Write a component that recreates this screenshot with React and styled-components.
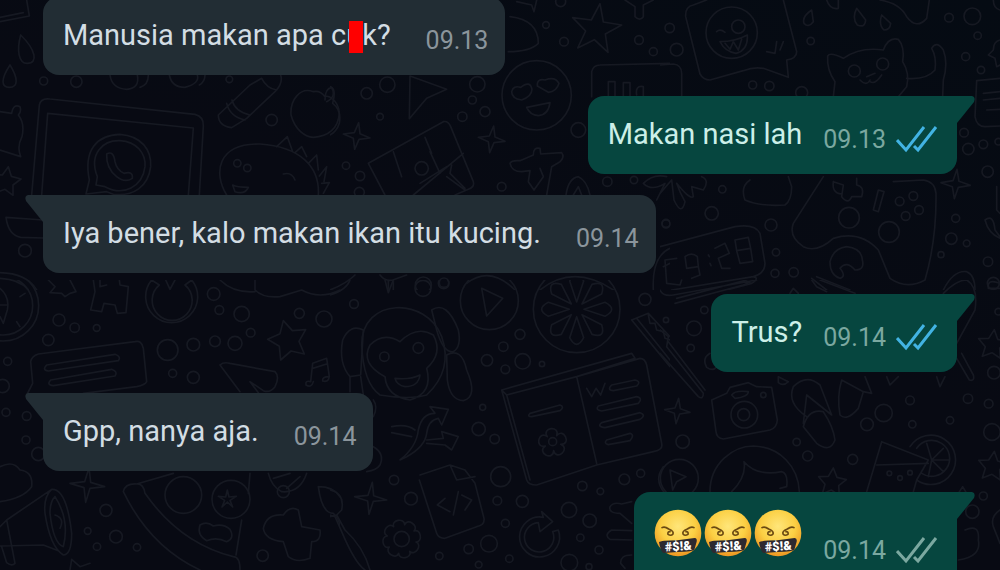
import React from 'react'
import styled, { createGlobalStyle } from 'styled-components'

const colors = {
  night: '#080a13',
  doodle: '#161922',
  incoming: '#222d34',
  incomingText: '#d3dde4',
  incomingMeta: '#8b959c',
  outgoing: '#06463f',
  outgoingText: '#ccefe8',
  outgoingMeta: '#7ba8a0',
  read: '#42b3e3',
  censor: '#ff0000',
}

const messages = [
  { id: 1, text: ['Manusia makan apa c', 'u', 'k?'], time: '09.13' },
  { id: 2, text: ['Makan nasi lah'], time: '09.13', mine: true, read: true, tail: true },
  { id: 3, text: ['Iya bener, kalo makan ikan itu kucing.'], time: '09.14', tail: true },
  { id: 4, text: ['Trus?'], time: '09.14', mine: true, read: true, tail: true },
  { id: 5, text: ['Gpp, nanya aja.'], time: '09.14', tail: true },
  { id: 6, emojis: 3, time: '09.14', mine: true, tail: true },
]

const polar = (cx, cy, len, a) => `${Math.round(cx + Math.cos(a) * len)} ${Math.round(cy + Math.sin(a) * len)}`

const star = (cx, cy, r, points = 5, inner = 0.5, turn = 0) => {
  const step = Math.PI / points
  let d = ''
  for (let i = 0; i < points * 2; i++) {
    const len = i % 2 ? r * inner : r
    d += `${i ? 'L' : 'M'}${polar(cx, cy, len, i * step - Math.PI / 2 + turn)}`
  }
  return d + 'Z'
}

// like star, but every tip is a round lobe
const flower = (cx, cy, valley, tip, petals, turn = 0) => {
  const step = (Math.PI * 2) / petals
  let d = `M${polar(cx, cy, valley, turn)}`
  for (let i = 0; i < petals; i++) {
    const a = turn + i * step
    d += `C${polar(cx, cy, tip, a + step * 0.08)} ${polar(cx, cy, tip, a + step * 0.92)} ${polar(cx, cy, valley, a + step)}`
  }
  return d + 'Z'
}

// every tile of the wallpaper is drawn on a 1020x870 board
const tiles = [
  {
    x: 0,
    y: 0,
    paths: [
      'M0 65L88 48L80 0M0 52L70 38',
      'M62 105C50 150 55 190 82 190C115 190 108 150 62 105Z',
      'M30 195C0 240 5 262 28 262C55 262 55 235 30 195Z',
      'M330 225Q335 265 380 268Q420 265 412 225M420 262Q445 255 445 225',
      'M508 225Q515 262 555 262Q600 250 592 225M598 255Q615 245 615 225',
      'M95 585L118 315Q122 293 150 297L585 343Q612 350 610 378L598 585',
      'M125 585L143 340L580 384L565 585',
      'M258 582L268 540C250 450 290 405 360 403C425 408 455 450 452 500C445 560 400 590 340 583L320 575L258 582',
      'M288 555L292 530C265 460 310 420 360 422C410 425 438 460 435 500C428 560 370 590 315 560Z',
      'M320 462Q340 450 345 485Q350 510 372 520Q400 512 397 535Q375 550 350 530Q318 505 320 462Z',
      'M655 345L750 255L785 235M655 345Q655 378 695 383L740 355L825 275Q850 250 842 225M680 310Q690 350 735 360M696 300Q705 335 750 345M785 235Q800 265 830 270',
      'M940 275C900 260 870 300 873 345C885 390 915 410 940 412C985 410 1015 385 1018 340C1015 300 985 285 975 290Q960 270 940 275M975 300Q975 265 995 263Q1010 290 980 305',
      'M680 585C640 520 650 430 780 432C900 440 960 500 955 585M830 440L862 410L877 452M885 458L905 440L920 470M925 490L950 465L955 510M958 528L980 500L972 545M965 550L988 548L970 580',
      'M698 555Q710 562 745 562Q735 585 705 575ZM850 522Q875 515 885 540',
      'M0 335L35 340Q40 310 60 320Q65 335 55 345Q75 370 66 410Q50 440 62 470L0 450',
      star(18, 545, 46, 5, 0.5, 0.15),
      'M130 660L18 652Q25 705 62 712L130 714',
      'M0 818Q80 820 110 870M0 835Q60 838 85 870',
    ],
    dots: [[131, 243, 12], [229, 245, 17], [815, 360, 17], [75, 752, 19], [712, 490, 11], [742, 504, 11], [688, 238, 10]],
  },
  {
    x: 330,
    y: 0,
    paths: [
      'M0 260Q20 265 8 310Q35 330 28 370Q20 395 0 405M540 50Q625 60 625 130Q600 155 535 155',
      'M560 5L605 15L612 35L620 0',
      star(798, 88, 78, 5, 0.4, 0.15),
      'M885 0L915 20L915 50Q930 65 940 50L940 15L970 0',
      'M240 228L350 268L290 295L238 356Z',
      'M545 275Q550 255 572 262Q600 240 606 268Q605 290 575 300Q545 295 545 275ZM622 258Q620 235 645 240Q675 228 687 250Q680 275 655 277ZM590 322L660 308Q655 345 625 347Q600 345 590 322Z',
      'M785 290L785 215Q790 195 810 195L1020 190M835 290V245H855V290M880 290V248H900V290M920 285Q915 255 940 260L940 290',
      star(80, 408, 40, 4, 0.3, 0.15),
      star(485, 418, 40, 4, 0.3, 0.15),
      'M165 585L115 490L340 365Q355 362 362 380L430 545Q435 560 415 568L375 585M285 412L305 460M190 455L215 530M300 455L330 520M250 585L400 460M350 530L405 570M270 550L350 500M365 495L360 520L405 565',
      'M540 490Q545 480 570 482L610 465Q610 440 630 445L632 462L695 458Q705 470 690 485L665 500L650 585M540 490Q545 515 575 515L600 512L595 545L612 570L640 530L630 505',
      'M708 585Q715 535 745 530Q770 540 780 585M730 585L745 560L755 585',
      'M940 550Q970 520 1010 530M940 550Q965 575 1005 550L980 600',
      'M0 870Q50 850 75 825M150 825Q165 845 188 840L230 825M175 842L175 870M190 842L190 870M410 850Q480 795 555 870M630 870Q730 790 850 870',
      'M970 870Q965 770 1020 745M1000 800L1020 790',
    ],
    dots: [[692, 5, 15], [648, 75, 10], [702, 125, 13], [927, 120, 13], [970, 155, 12], [172, 254, 23], [110, 280, 17], [442, 253, 23], [427, 300, 12], [465, 335, 15], [150, 350, 10], [397, 350, 14], [620, 286, 104], [275, 505, 20], [48, 497, 11], [90, 528, 14], [88, 577, 15], [515, 560, 13], [745, 390, 22], [832, 545, 14], [912, 540, 11], [280, 855, 24], [342, 848, 14], [1008, 670, 12]],
  },
  {
    x: 660,
    y: 0,
    paths: [
      'M370 0L410 155Q410 175 380 180L385 232L310 205Q280 200 250 212L150 240Q130 240 120 222L77 50Q75 20 100 15L140 0',
      'M180 125Q225 125 262 105Q265 150 228 160Q195 155 180 125ZM195 130L210 148L220 125L235 150L245 118M170 95Q180 85 195 97M320 155L345 160L350 125M360 150L370 125',
      'M455 30Q425 50 432 70Q445 85 460 65ZM590 25Q575 55 592 75Q615 85 617 60ZM665 45Q655 75 672 90Q690 90 692 70ZM500 0Q510 30 535 25L535 0',
      'M660 0Q720 10 740 50Q770 90 800 55L808 0',
      'M0 195L40 192Q65 195 65 220L65 290',
      'M520 290L525 245Q500 210 503 168Q510 155 550 175Q600 140 670 150Q685 110 715 118Q735 140 728 185Q750 220 740 260L715 290M620 230L645 220M630 245Q645 255 665 225M600 240Q620 260 630 240',
      'M740 235Q800 240 825 210Q830 170 815 145Q830 120 850 150Q865 190 850 240L848 290',
      'M1020 120Q1000 125 1000 150L985 165L1005 175L1010 200L1020 195M1000 0Q1000 25 1020 30',
      'M1020 235L950 242L945 350Q950 380 975 380L1020 378M970 280L1020 275M970 300L1020 295M980 330L1020 328',
      'M0 580L35 540L42 600Q65 650 75 605Q60 580 50 550Q90 600 100 590L95 560L130 570Q150 540 125 530',
      'M270 540Q240 560 255 600Q300 620 375 615Q395 600 395 560L385 530',
      'M490 530L400 670Q385 710 430 740Q470 760 520 715Q600 690 655 750L690 835Q740 870 795 840Q830 720 828 580Q825 545 790 540L700 545',
      'M520 545L550 555L545 590Q565 615 575 590L605 590Q615 560 590 555L590 535M520 545Q515 580 545 582M640 630L655 570L672 575L655 635Z',
      star(887, 552, 44, 4, 0.3, 0.1),
      'M0 740L225 680Q285 670 300 700L315 790Q315 820 280 830L35 870M280 830Q300 835 275 850L200 870',
      'M50 775L15 780L20 850L60 855L65 840M75 770Q95 755 112 770L115 800L80 805ZM115 800L120 825L95 835M165 745L195 730L208 760L175 775L185 805L210 805M225 720L265 712L272 745L230 752ZM230 752L240 790L278 785L272 745M145 765L148 770M150 790L153 797',
      'M510 785Q520 745 560 740Q605 745 607 780Q615 810 585 810Q560 780 540 805Q560 830 540 835Q510 825 510 785Z',
      'M455 835L500 870M470 830L570 870M850 870Q880 810 920 815Q945 825 945 870M975 660Q1000 640 1005 690L1020 710M975 660Q985 700 1020 715M1010 560L1010 630L1020 640',
    ],
    dots: [[29, 84, 14], [50, 149, 19], [215, 98, 77], [235, 80, 20], [452, 123, 11], [278, 255, 12], [328, 258, 14], [867, 53, 13], [937, 49, 25], [953, 107, 11], [917, 170, 12], [963, 210, 11], [583, 213, 18], [668, 192, 18], [425, 278, 18], [912, 398, 13], [925, 447, 17], [970, 433, 13], [1015, 425, 10], [983, 515, 17], [187, 568, 11], [155, 640, 20], [18, 672, 12], [333, 675, 18], [348, 757, 11], [345, 820, 12], [401, 817, 14], [567, 653, 31], [687, 696, 31], [719, 604, 13], [760, 588, 13], [777, 630, 13], [737, 648, 13], [887, 655, 12], [874, 716, 17], [920, 730, 10], [843, 764, 9], [984, 785, 14], [1000, 850, 18]],
  },
  {
    x: 0,
    y: 280,
    paths: [
      'M0 25Q30 50 22 90L10 130L0 110M0 75L20 75M60 50L75 40M50 125L60 140',
      'M145 0L165 20L150 38L185 40L195 50L210 40L228 35L210 0',
      'M280 0L285 35L272 90L305 95L312 70L345 75L352 100L378 98L385 20L360 15L358 0M300 0V20L320 15',
      'M455 0A78 78 0 1 0 575 0L555 15A60 60 0 1 1 478 15ZM497 0L510 28L525 0',
      'M660 0Q700 40 765 35M765 0L765 30Q790 55 840 50L905 30Q960 60 1020 30',
      star(865, 182, 62, 5, 0.52, -0.25),
      'M80 345L98 310L92 245Q95 228 115 222L405 185Q425 180 430 205L440 305Q435 315 410 320L250 340',
      'M140 255L345 223Q365 230 355 242L145 273Q125 270 140 255ZM152 300L335 268Q355 275 345 288L160 317Q138 315 152 300Z',
      'M660 255Q670 245 690 250L825 275Q840 290 825 320Q810 340 790 332L750 305L775 338M660 255L720 335',
      'M932 305L938 250L980 235L988 290M938 265L980 252M932 305Q915 300 918 315Q935 325 940 305M988 290Q965 290 968 303Q985 308 988 290',
      star(262, 615, 52, 4, 0.25, 0.1),
      'M0 560Q40 540 60 570Q100 575 95 620Q70 655 0 665',
      'M20 720L155 628Q200 625 215 760Q215 825 190 825Q150 800 135 700Q130 650 155 628M165 650Q210 720 190 800Q160 790 150 700Q150 665 165 650M165 705Q195 715 180 745M0 798L130 795L175 812M20 720L45 850Q35 860 20 848L5 800M0 740L20 720',
      'M370 635Q375 610 410 612L520 580M370 635Q450 800 600 870M410 612Q430 610 435 640Q540 790 700 830Q720 830 720 870M725 720L708 825M750 580L745 640',
      'M600 735Q620 722 640 738Q670 730 690 748Q705 775 680 785Q650 770 620 782Q590 765 600 735Z',
      star(682, 658, 28, 5, 0.3, 0),
      'M805 580Q815 620 845 635Q900 640 920 580M820 595L870 580M860 625L900 590M955 620Q1000 620 1020 650M955 620Q965 700 1000 700Q1020 720 1020 740',
      'M790 745Q800 700 850 705Q870 675 895 690L905 740L960 750Q965 785 935 785L930 835Q890 850 865 830L850 785Q795 780 790 745Z',
      'M210 870L215 838L240 860L270 850',
    ],
    dots: [[10, 77, 88], [10, 77, 106], [177, 120, 18], [224, 143, 14], [290, 144, 10], [145, 180, 17], [23, 244, 12], [8, 318, 20], [641, 42, 19], [658, 90, 13], [725, 102, 23], [898, 100, 15], [972, 117, 24], [752, 158, 13], [503, 210, 31], [580, 194, 19], [645, 184, 16], [705, 190, 21], [518, 280, 12], [580, 292, 18], [18, 397, 12], [80, 408, 13], [78, 480, 12], [115, 522, 20], [550, 645, 55], [693, 658, 57], [318, 691, 18], [263, 753, 10], [348, 770, 19], [291, 800, 11], [411, 802, 11], [788, 827, 17], [850, 635, 18]],
  },
  {
    x: 330,
    y: 280,
    paths: [
      'M455 25L518 55L470 108ZM0 45Q50 30 60 0M165 0L175 38L190 0',
      'M95 195C95 50 290 50 335 170Q370 270 290 345Q240 360 150 345Q100 310 95 195M210 185Q160 155 120 195Q90 250 165 290Q170 350 240 360Q310 340 290 265Q340 220 310 165Q260 135 210 185ZM195 295Q240 300 270 285Q265 320 225 320Q200 315 195 295Z',
      'M305 90Q350 60 385 150Q395 200 370 215Q340 220 320 150ZM350 225Q395 200 410 270Q445 350 400 362Q360 360 352 300ZM100 150Q60 130 38 180Q25 250 60 290L92 285ZM60 290L60 335M92 290L100 345',
      'M515 330L905 220L915 235L740 290L530 345ZM740 290L930 235Q945 235 950 255L995 490Q1000 510 970 515L800 555L620 615Q595 615 590 600L515 330M530 345L600 600M740 290L800 550',
      'M600 400L690 375Q705 380 690 392L605 410Q590 410 600 400ZM845 315L915 300Q935 305 920 318L850 332Q830 330 845 315ZM805 378L920 350Q940 355 925 370L815 393Q795 390 805 378ZM815 428L930 398Q950 405 930 418L825 443Q800 440 815 428ZM830 480L900 460Q915 465 900 482L835 494Q820 490 830 480Z',
      'M770 325L785 350L798 325L812 345L825 310',
      flower(668, 488, 24, 58, 5, 0.2),
      'M905 120L955 100L1020 170M905 120L1020 260M955 105L960 130L975 130L980 150L1000 155L1005 175L1020 180M920 115L1020 240',
      'M210 540Q260 500 265 450Q275 400 315 400L300 380L355 388L335 435L325 415Q295 420 290 460Q285 500 230 530ZM185 440Q230 430 255 450M185 458Q220 465 245 470M290 480L340 475L335 455L385 470L365 510L345 495L290 490',
      'M270 585L360 555L405 570L435 610L462 715Q465 735 440 740L345 775Q325 775 320 760L268 600M360 555L380 600L435 590M345 655L322 675L360 695M385 635L370 705M395 645L425 660L405 690',
      star(122, 655, 48, 4, 0.25, 0.1),
      flower(215, 777, 44, 66, 8, 0.2),
      'M640 712A60 60 0 1 0 685 750L668 755A44 44 0 1 1 625 728L630 755L668 725L635 695Z',
      'M0 630Q45 640 35 690L20 705L45 750Q100 800 120 870M0 705L15 710L35 755Q75 850 105 870M20 705L0 710',
      'M840 680Q850 665 875 672L905 665M840 680Q835 700 870 700L905 730M905 752L845 750Q820 765 840 778L905 780M905 825Q870 825 872 850L885 865M1000 560Q970 600 1005 640L1020 640',
      'M130 360Q145 380 130 410M130 500Q165 520 150 555Q140 570 110 575',
      ...[0, 45, 90, 135, 180, 225, 270, 315].map(deg => {
        const a = (deg * Math.PI) / 180
        const at = (turn, len) => polar(740, 88, len, a + turn)
        return `M${at(0, 22)}L${at(-0.24, 88)}Q${at(0, 125)} ${at(0.24, 88)}Z`
      }),
    ],
    dots: [[478, 62, 87], [163, 230, 14], [265, 204, 16], [740, 88, 130], [279, 25, 24], [341, 10, 16], [72, 72, 13], [570, 163, 15], [520, 200, 14], [471, 241, 17], [526, 268, 13], [578, 244, 23], [636, 252, 8], [945, 58, 18], [458, 382, 9], [446, 447, 20], [494, 477, 14], [668, 485, 12], [192, 600, 14], [243, 656, 19], [512, 590, 30], [502, 662, 13], [577, 664, 18], [526, 730, 12], [477, 791, 25], [416, 807, 14], [328, 828, 11], [446, 854, 10], [538, 836, 11], [215, 777, 23], [717, 690, 23], [779, 722, 20], [751, 773, 11], [718, 848, 25], [807, 810, 12], [777, 860, 9], [757, 618, 14], [811, 634, 10], [883, 598, 16], [932, 580, 12]],
  },
  {
    x: 660,
    y: 280,
    paths: [
      'M0 30Q10 50 40 45L290 0M45 70L250 15L285 0M50 55L260 0M390 40L400 25L415 40M455 0L470 20L500 35M480 0L585 40M850 40Q890 0 920 0Q955 20 945 90L890 190M1020 10Q980 -5 985 25L1020 25',
      'M0 150L25 170L20 200L130 340Q130 360 115 350L0 220M25 185L135 330M905 220L940 285Q945 305 928 300L890 235',
      'M155 360L200 340L210 322L265 308L290 320L335 322L352 420Q350 445 330 450L190 477Q170 475 168 455ZM215 345Q225 330 265 335Q265 350 225 355ZM355 290L385 305Q370 320 355 308Z',
      'M440 410Q380 370 400 320Q440 280 480 315L515 405L440 345L430 430M430 440Q445 385 490 395Q520 440 525 480Q510 520 470 490ZM545 300L610 335L595 385Q560 425 540 405Q530 350 545 300M610 335L635 340L615 290M680 290L690 315L715 290M830 290L840 320L855 290',
      star(52, 393, 38, 4, 0.3, 0.1),
      star(998, 195, 46, 5, 0.5, 0.1),
      star(998, 560, 46, 5, 0.5, 0.1),
      star(516, 608, 44, 5, 0.5, 0.1),
      'M150 635C150 550 220 498 280 498C360 500 415 560 418 635M215 635Q260 590 252 545Q290 590 365 575Q385 580 380 620L360 625M30 570L78 590L50 605L38 630Z',
      'M665 485L805 540L770 600L760 635M665 485L620 635M650 555L805 550M750 500A74 74 0 1 1 770 600M770 505A54 54 0 1 1 785 580M815 540L800 490M815 540L850 505M815 540L865 540M815 540L850 575M815 540L805 590',
      'M915 750Q960 730 955 780Q965 830 895 840M1000 740Q990 710 1020 690M1000 740L1020 790M895 640L908 620L920 640',
      'M150 220Q125 235 140 262Q160 275 170 260',
    ],
    dots: [[133, 90, 11], [102, 145, 22], [18, 120, 8], [92, 204, 11], [253, 404, 40], [251, 404, 18], [310, 345, 8], [68, 485, 20], [58, 595, 57], [410, 486, 11], [443, 528, 15], [578, 538, 15], [621, 433, 19], [671, 399, 26], [750, 361, 13], [757, 433, 11], [870, 421, 11], [924, 356, 14], [986, 371, 13], [996, 456, 25], [1002, 278, 19], [688, 580, 7], [720, 594, 7], [750, 578, 7], [970, 648, 12], [937, 695, 20], [1015, 95, 10]],
  },
]

const Wallpaper = () => (
  <Backdrop viewBox="0 0 1000 570" preserveAspectRatio="xMidYMid slice" aria-hidden="true">
    {tiles.map(tile => (
      <svg key={`${tile.x}-${tile.y}`} x={tile.x} y={tile.y} width="340" height="290" viewBox="0 0 1020 870">
        {tile.paths.map((d, i) => <path key={i} d={d} />)}
        {tile.dots.map(([cx, cy, r], i) => <circle key={i} cx={cx} cy={cy} r={r} />)}
      </svg>
    ))}
  </Backdrop>
)

const Swearing = () => (
  <Face viewBox="0 0 144 144" role="img" aria-label="🤬">
    <defs>
      <radialGradient id="skin" cx="50%" cy="36%" r="62%">
        <stop offset="0" stopColor="#ffe67a" />
        <stop offset="0.6" stopColor="#fbcf43" />
        <stop offset="1" stopColor="#ee9a24" />
      </radialGradient>
    </defs>
    <circle cx="72" cy="72" r="70" fill="url(#skin)" />
    <g fill="none" stroke="#6b4a12" strokeWidth="5" strokeLinecap="round">
      <path d="M24 56Q32 51 44 60Q60 66 57 75Q51 82 42 76Q40 68 48 68" />
      <path d="M120 56Q112 51 100 60Q84 66 87 75Q93 82 102 76Q104 68 96 68" />
    </g>
    <path d="M15 100Q20 94 70 94L122 87Q130 88 128 98L121 122Q116 127 72 129L28 132Q20 128 15 100Z" fill="#2d2930" />
    <Curse x="73" y="125" transform="rotate(-4 72 112)">#$!&amp;</Curse>
  </Face>
)

const Ticks = ({ read }) => (
  <TickIcon $read={read} viewBox="0 0 42 28" role="img" aria-label={read ? 'Dibaca' : 'Terkirim'}>
    <path d="M1 14L10 24L28 1M18 20L22 24L40 1" />
  </TickIcon>
)

const Message = ({ text, emojis, time, mine, read, tail }) => (
  <Bubble $mine={mine} $tail={tail} $big={!!emojis}>
    {emojis ? (
      <Emojis>
        {Array.from({ length: emojis }, (_, i) => <Swearing key={i} />)}
      </Emojis>
    ) : (
      <Text>
        {text[0]}
        {text[1] && <Censored>{text[1]}</Censored>}
        {text[2]}
      </Text>
    )}
    <Meta $mine={mine} $big={!!emojis}>
      <time>{time}</time>
      {mine && <Ticks read={read} />}
    </Meta>
  </Bubble>
)

const App = () => (
  <Chat>
    <GlobalStyle />
    <Wallpaper />
    <List>
      {messages.map(({ id, ...rest }) => <Message key={id} {...rest} />)}
    </List>
  </Chat>
)

const GlobalStyle = createGlobalStyle`
  * {
    box-sizing: border-box;
  }
  body {
    margin: 0;
    background: ${colors.night};
    font-family: Roboto, 'Liberation Sans', sans-serif;
  }
`

const Chat = styled.main`
  position: relative;
  height: 100vh;
  overflow: hidden;
  background: linear-gradient(200deg, #050b13 0%, ${colors.night} 45%);
`

const Backdrop = styled.svg`
  position: absolute;
  inset: 0;
  width: 100%;
  height: 100%;
  fill: none;
  stroke: ${colors.doodle};
  stroke-width: 5;
  stroke-linecap: round;
  stroke-linejoin: round;
`

/* scrolled a touch past the top of the first bubble */
const List = styled.ul`
  position: relative;
  display: flex;
  flex-direction: column;
  gap: 21px;
  margin: -3px 0 0;
  padding: 0 43px;
  list-style: none;
`

const Bubble = styled.li`
  position: relative;
  display: flex;
  align-items: flex-start;
  align-self: ${({ $mine }) => ($mine ? 'flex-end' : 'flex-start')};
  gap: ${({ $mine }) => ($mine ? 21 : 35)}px;
  padding: ${({ $big }) => ($big ? 17 : 21)}px ${({ $mine }) => ($mine ? 19 : 17)}px 19px 20px;
  border-radius: 16px;
  background: ${({ $mine }) => ($mine ? colors.outgoing : colors.incoming)};
  color: ${({ $mine }) => ($mine ? colors.outgoingText : colors.incomingText)};

  ${({ $tail, $mine }) => $tail && `
    border-top-${$mine ? 'right' : 'left'}-radius: 0;

    &::before {
      content: '';
      position: absolute;
      top: 0;
      ${$mine ? 'left' : 'right'}: 100%;
      width: 18px;
      height: 27px;
      background: inherit;
      clip-path: path('M18 0H3Q-1 1 1 6L18 27Z');
      ${$mine ? 'transform: scaleX(-1);' : ''}
    }
  `}
`

const Text = styled.p`
  margin: 0;
  font-size: 29px;
  line-height: 34px;
`

const Censored = styled.span`
  position: relative;

  &::after {
    content: '';
    position: absolute;
    top: 3px;
    left: 3px;
    width: 14px;
    height: 32px;
    background: ${colors.censor};
  }
`

const Emojis = styled.div`
  display: flex;
  gap: 2px;
`

const Face = styled.svg`
  width: 48px;
  height: 48px;
`

const Curse = styled.text`
  fill: #ffffff;
  font-size: 38px;
  font-weight: 900;
  text-anchor: middle;
`

const Meta = styled.div`
  display: flex;
  align-items: center;
  gap: 10px;
  margin-top: ${({ $big }) => ($big ? 27 : 8)}px;
  font-size: 25px;
  line-height: 30px;
  color: ${({ $mine }) => ($mine ? colors.outgoingMeta : colors.incomingMeta)};
`

const TickIcon = styled.svg`
  width: 42px;
  height: 28px;
  fill: none;
  stroke: ${({ $read }) => ($read ? colors.read : colors.outgoingMeta)};
  stroke-width: 3;
`

export default App
